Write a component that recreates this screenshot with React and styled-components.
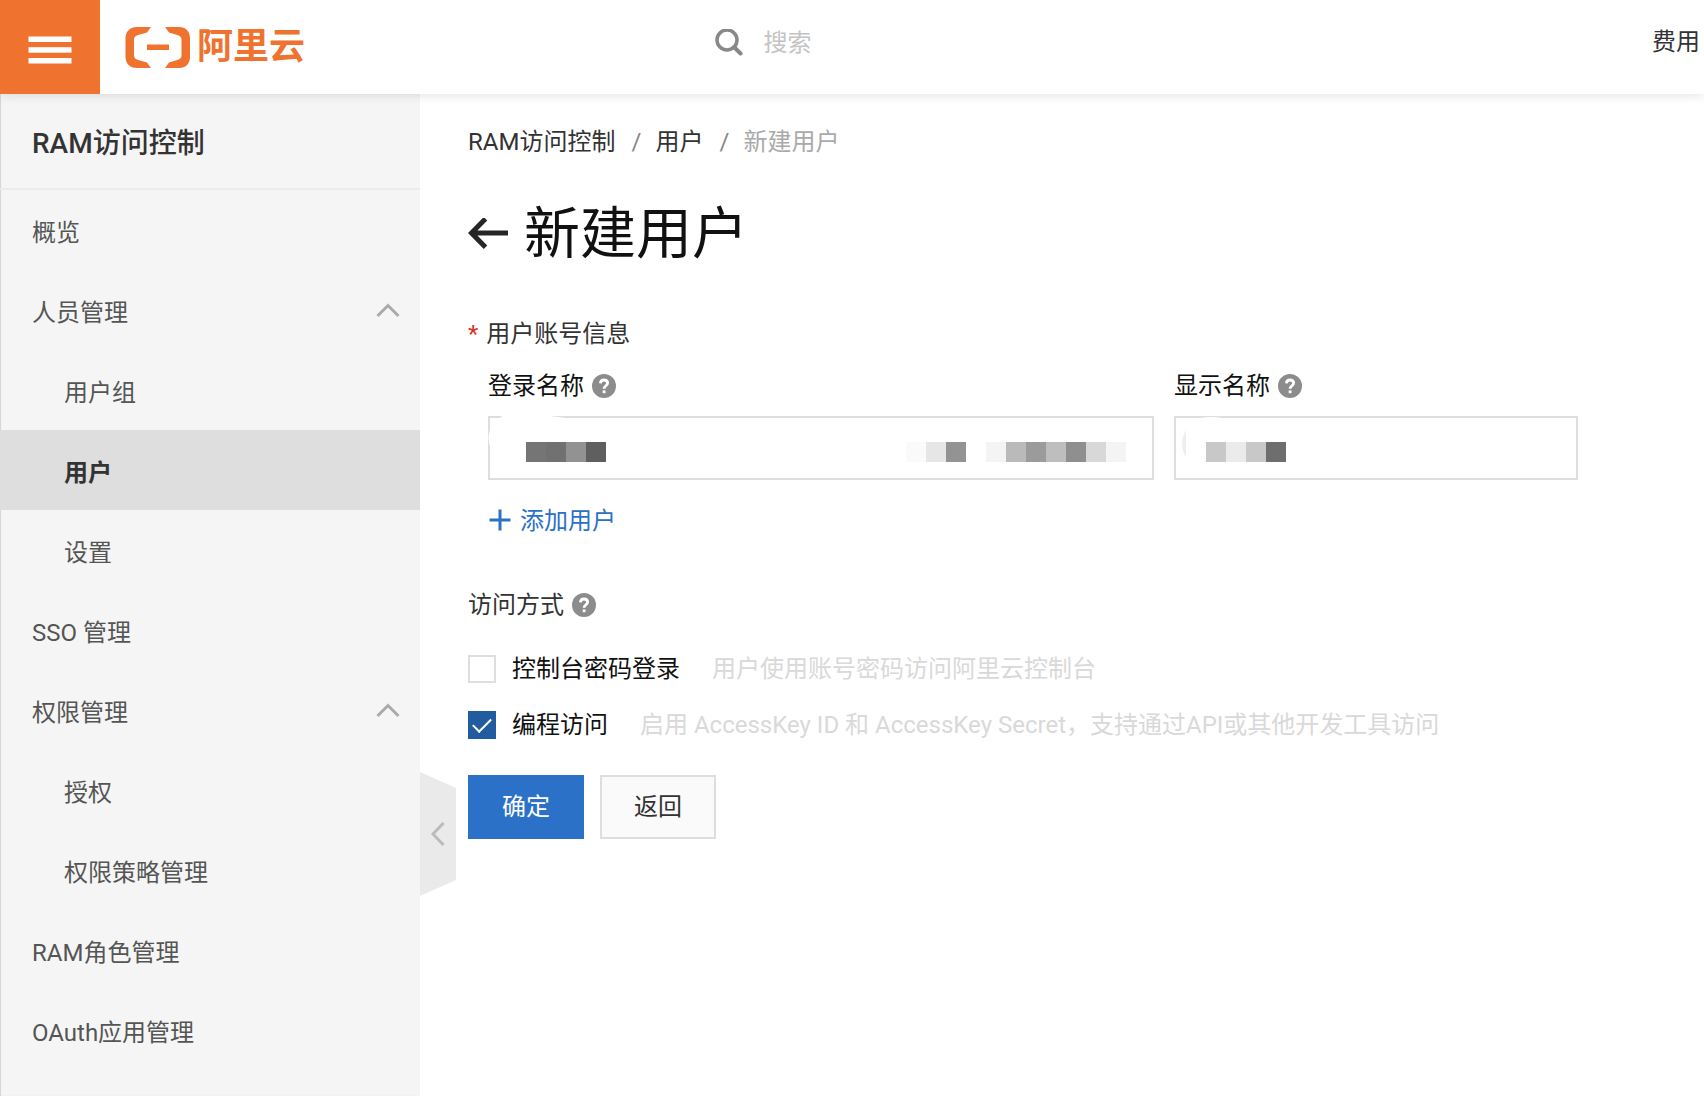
import React from 'react';
import styled, { createGlobalStyle } from 'styled-components';

const GlobalStyle = createGlobalStyle`
  *, *::before, *::after { box-sizing: border-box; }
  body {
    margin: 0;
    background: #fff;
    color: #333;
    font: 400 24px/36px Roboto, "Noto Sans CJK SC", sans-serif;
    overflow-x: hidden;
  }
  button, input { font: inherit; color: inherit; }
  a { color: inherit; text-decoration: none; }
  svg { display: block; flex: none; }
`;

const Page = styled.div`
  min-height: 100vh;
  display: flex;
  flex-direction: column;
`;

const TopBar = styled.header`
  position: relative;
  z-index: 2;
  height: 94px;
  display: flex;
  align-items: center;
  background: #fff;
  box-shadow: 0 2px 10px rgba(0, 0, 0, 0.1);
`;

const MenuButton = styled.button`
  width: 100px;
  height: 100%;
  padding: 6px 0 0;
  border: 0;
  background: #ef732e;
  display: flex;
  align-items: center;
  justify-content: center;
`;

const Brand = styled.a`
  flex: 0 0 36%;
  padding-left: 25px;
  display: flex;
  align-items: center;
  gap: 6px;
  color: #ef732e;
  font-size: 36px;
  font-weight: 700;
`;

const SearchBox = styled.label`
  flex: 1;
  display: flex;
  align-items: center;
  gap: 20px;
  padding: 0 0 8px 2px;
`;

const SearchInput = styled.input`
  flex: 1;
  min-width: 0;
  height: 36px;
  padding: 0;
  border: 0;
  outline: 0;
  background: transparent;
  &::placeholder { color: #c4c4c4; opacity: 1; }
`;

const TopLink = styled.a`
  padding: 0 4px 10px 16px;
`;

const Body = styled.div`
  flex: 1;
  display: flex;
`;

const Sidebar = styled.aside`
  position: relative;
  flex: 0 0 420px;
  background: #f5f5f5;
  box-shadow: inset 1px 0 1px #d4d4d4;
`;

const SidebarTitle = styled.h2`
  margin: 0;
  height: 96px;
  padding: 6px 0 0 32px;
  border-bottom: 2px solid #ebebeb;
  display: flex;
  align-items: center;
  font-size: 28px;
  font-weight: 500;
`;

const NavItem = styled.a`
  height: 80px;
  padding: 6px 20px 0 ${(p) => (p.$nested ? 64 : 32)}px;
  display: flex;
  align-items: center;
  justify-content: space-between;
  color: ${(p) => (p.$active ? '#333' : '#555')};
  background: ${(p) => (p.$active ? '#dedede' : 'transparent')};
  font-weight: ${(p) => (p.$active ? 700 : 400)};
`;

const CollapseHandle = styled.button`
  position: absolute;
  left: 100%;
  top: 678px;
  width: 36px;
  height: 124px;
  padding: 0;
  border: 0;
  background: #eaeaea;
  clip-path: polygon(0 0, 100% 16px, 100% 108px, 0 100%);
  display: flex;
  align-items: center;
  justify-content: center;
`;

const Main = styled.main`
  flex: 1;
  min-width: 0;
  padding: 30px 48px 48px;
`;

const Breadcrumb = styled.nav`
  display: flex;
  gap: 16px;
`;

const Slash = styled.span`
  width: 8px;
  color: #888;
`;

const Current = styled.span`
  color: #aaa;
`;

const TitleRow = styled.div`
  margin-top: 42px;
  display: flex;
  align-items: center;
  gap: 16px;
`;

const BackButton = styled.button`
  padding: 0;
  border: 0;
  background: none;
`;

const Title = styled.h1`
  margin: 0;
  color: #111;
  font-size: 56px;
  font-weight: 400;
  line-height: 64px;
`;

const SectionTitle = styled.h3`
  margin: ${(p) => p.$top}px 0 0;
  display: flex;
  align-items: center;
  gap: 8px;
  font-size: 24px;
  font-weight: 400;
`;

const Required = styled.span`
  color: #d93026;
`;

const Fields = styled.div`
  margin: 16px 0 0 20px;
  display: grid;
  grid-template-columns: minmax(0, 666px) minmax(0, 404px);
  gap: 20px;
`;

const FieldLabel = styled.label`
  display: flex;
  align-items: center;
  gap: 8px;
  margin-bottom: 12px;
  color: #111;
`;

const FieldFrame = styled.div`
  position: relative;
  overflow: hidden;
`;

const TextInput = styled.input`
  display: block;
  width: 100%;
  height: 64px;
  padding: 0 24px;
  border: 2px solid #dedede;
  background: #fff;
  outline: 0;
`;

const Redaction = styled.svg`
  position: absolute;
  left: 0;
  top: 0;
  pointer-events: none;
`;

const AddUser = styled.button`
  margin: 23px 0 0 20px;
  padding: 0;
  border: 0;
  background: none;
  color: #2b71c7;
  display: flex;
  align-items: center;
  gap: 8px;
`;

const Options = styled.div`
  margin-top: 28px;
  display: grid;
  gap: 20px;
`;

const Option = styled.div`
  display: flex;
  align-items: center;
  gap: 32px;
`;

const OptionLabel = styled.label`
  display: flex;
  align-items: center;
  gap: 16px;
  color: #111;
`;

const Checkbox = styled.input`
  appearance: none;
  flex: none;
  width: 28px;
  height: 28px;
  margin: 4px 0;
  border: 2px solid #dedede;
  background: #fff;
  display: grid;
  place-items: center;
  &:checked {
    border-color: #215ca0;
    background: #215ca0;
  }
  &:checked::before {
    content: '';
    width: 18px;
    height: 10px;
    margin-bottom: 4px;
    border: solid #fff;
    border-width: 0 0 2px 2px;
    transform: rotate(-45deg);
  }
`;

const Hint = styled.span`
  color: #d9d9d9;
`;

const Actions = styled.div`
  margin-top: 32px;
  display: flex;
  gap: 16px;
`;

const ActionButton = styled.button`
  width: 116px;
  height: 64px;
  padding: 0;
  border: 2px solid ${(p) => (p.$primary ? '#2b71c7' : '#dedede')};
  background: ${(p) => (p.$primary ? '#2b71c7' : '#fafafa')};
  color: ${(p) => (p.$primary ? '#fff' : '#333')};
`;

const Help = () => (
  <svg width="24" height="24" viewBox="0 0 24 24" aria-hidden="true">
    <circle cx="12" cy="12" r="12" fill="#8c8c8c" />
    <path d="M8.4 9.4C8.5 7.2 10 6 12 6c2.100 0 3.600 1.200 3.600 3.100 0 2.600-3.500 2.700-3.500 5.700" fill="none" stroke="#fff" strokeWidth="2.800" />
    <rect x="10.700" y="16.400" width="2.800" height="2.800" fill="#fff" />
  </svg>
);

const ChevronUp = () => (
  <svg width="24" height="20" viewBox="0 0 24 20" aria-hidden="true">
    <path d="M1.500 13 12 2.500 22.500 13" fill="none" stroke="#aaa" strokeWidth="3" />
  </svg>
);

const Blocks = ({ x, tones }) =>
  tones.map((tone, i) => <rect key={i} x={x + i * 20} y="26" width="20" height="20" fill={tone} />);

const NAV = [
  { text: '概览' },
  { text: '人员管理', group: true },
  { text: '用户组', nested: true },
  { text: '用户', nested: true, active: true },
  { text: '设置', nested: true },
  { text: 'SSO 管理' },
  { text: '权限管理', group: true },
  { text: '授权', nested: true },
  { text: '权限策略管理', nested: true },
  { text: 'RAM角色管理' },
  { text: 'OAuth应用管理' },
];

export default function App() {
  return (
    <Page>
      <GlobalStyle />
      <TopBar>
        <MenuButton aria-label="菜单">
          <svg width="44" height="28" viewBox="0 0 44 28" fill="#fff">
            <rect x="0.500" y="0.500" width="43" height="5.500" />
            <rect x="0.500" y="11.200" width="43" height="5.500" />
            <rect x="0.500" y="22" width="43" height="5.500" />
          </svg>
        </MenuButton>
        <Brand href="#">
          <svg width="66" height="41" viewBox="0 0 66 41" fill="#ef732e" aria-hidden="true">
            <path d="M26 0H12C5 0 .5 4.500 .5 11.500v18C.5 36.500 5 41 12 41h14l-4-5.500-9.500-2.800C10 32 9 30.500 9 28V13c0-2.500 1-4 3.500-4.700L22 5.500z" />
            <path d="M40 0h14c7 0 11 4.500 11 11.500v18C65 36.500 61 41 54 41H40l4-5.500 9-2.800c2.500-.7 3.500-2.200 3.500-4.700V13c0-2.500-1-4-3.500-4.700l-9-2.800z" />
            <rect x="22" y="17.500" width="22" height="5.500" />
          </svg>
          阿里云
        </Brand>
        <SearchBox>
          <svg width="28" height="28" viewBox="0 0 28 28" fill="none" stroke="#888" aria-hidden="true">
            <circle cx="12" cy="11" r="10" strokeWidth="3.500" />
            <path d="m19 18 6.500 6.500" strokeWidth="4" strokeLinecap="round" />
          </svg>
          <SearchInput type="text" placeholder="搜索" aria-label="搜索" />
        </SearchBox>
        <TopLink href="#">费用</TopLink>
      </TopBar>
      <Body>
        <Sidebar>
          <SidebarTitle>RAM访问控制</SidebarTitle>
          <nav>
            {NAV.map((item) => (
              <NavItem key={item.text} href="#" $nested={item.nested} $active={item.active}>
                {item.text}
                {item.group && <ChevronUp />}
              </NavItem>
            ))}
          </nav>
          <CollapseHandle aria-label="收起">
            <svg width="14" height="24" viewBox="0 0 14 24" fill="none" stroke="#bbb" strokeWidth="3" aria-hidden="true">
              <path d="M12.500 1 2 12l10.500 11" />
            </svg>
          </CollapseHandle>
        </Sidebar>
        <Main>
          <Breadcrumb>
            <a href="#">RAM访问控制</a>
            <Slash>/</Slash>
            <a href="#">用户</a>
            <Slash>/</Slash>
            <Current>新建用户</Current>
          </Breadcrumb>
          <TitleRow>
            <BackButton aria-label="返回上一页">
              <svg width="40" height="32" viewBox="0 0 40 32" fill="none" stroke="#262626" strokeWidth="5" aria-hidden="true">
                <path d="M40 15H4M17.500 .8 3.500 15l14 14.200" />
              </svg>
            </BackButton>
            <Title>新建用户</Title>
          </TitleRow>
          <SectionTitle $top={50}>
            <Required>*</Required>
            用户账号信息
          </SectionTitle>
          <Fields>
            <div>
              <FieldLabel htmlFor="login-name">
                登录名称 <Help />
              </FieldLabel>
              <FieldFrame>
                <TextInput id="login-name" type="text" />
                <Redaction width="666" height="64" aria-hidden="true">
                  <path d="M12 2 14 0H62L78 2z" fill="#fff" />
                  <path d="M2 14Q-1 22 2 30z" fill="#fff" />
                  <Blocks x={38} tones={['#757575', '#717171', '#929292', '#5f5f5f']} />
                  <Blocks x={418} tones={['#fafafa', '#e6e6e6', '#939393']} />
                  <Blocks x={498} tones={['#f4f4f4', '#bababa', '#9b9b9b', '#bebebe', '#8f8f8f', '#d8d8d8', '#f4f4f4']} />
                </Redaction>
              </FieldFrame>
            </div>
            <div>
              <FieldLabel htmlFor="display-name">
                显示名称 <Help />
              </FieldLabel>
              <FieldFrame>
                <TextInput id="display-name" type="text" />
                <Redaction width="404" height="64" aria-hidden="true">
                  <path d="M26 2Q38 0 48 2z" fill="#fff" />
                  <path d="M12 14Q4 28 12 41z" fill="#eee" />
                  <Blocks x={32} tones={['#c8c8c8', '#ebebeb', '#c8c8c8', '#6e6e6e']} />
                </Redaction>
              </FieldFrame>
            </div>
          </Fields>
          <AddUser>
            <svg width="24" height="24" viewBox="0 0 24 24" fill="#2b71c7" aria-hidden="true">
              <path d="M10.500 .5h3v9h9v3h-9v9h-3v-9h-9v-3h9z" />
            </svg>
            添加用户
          </AddUser>
          <SectionTitle $top={48}>
            访问方式 <Help />
          </SectionTitle>
          <Options>
            <Option>
              <OptionLabel>
                <Checkbox type="checkbox" />
                控制台密码登录
              </OptionLabel>
              <Hint>用户使用账号密码访问阿里云控制台</Hint>
            </Option>
            <Option>
              <OptionLabel>
                <Checkbox type="checkbox" defaultChecked />
                编程访问
              </OptionLabel>
              <Hint>启用 AccessKey ID 和 AccessKey Secret，支持通过API或其他开发工具访问</Hint>
            </Option>
          </Options>
          <Actions>
            <ActionButton $primary>确定</ActionButton>
            <ActionButton>返回</ActionButton>
          </Actions>
        </Main>
      </Body>
    </Page>
  );
}
